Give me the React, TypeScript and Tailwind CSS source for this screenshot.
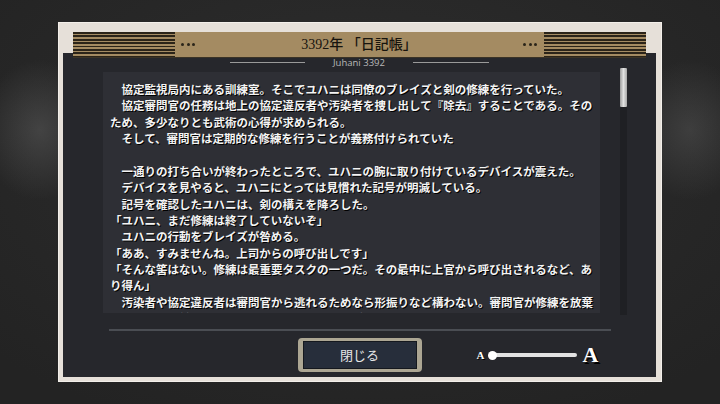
import React from "react";

const lines: string[] = [
  "　協定監視局内にある訓練室。そこでユハニは同僚のブレイズと剣の修練を行っていた。",
  "　協定審問官の任務は地上の協定違反者や汚染者を捜し出して『除去』することである。その",
  "ため、多少なりとも武術の心得が求められる。",
  "　そして、審問官は定期的な修練を行うことが義務付けられていた",
  "",
  "　一通りの打ち合いが終わったところで、ユハニの腕に取り付けているデバイスが震えた。",
  "　デバイスを見やると、ユハニにとっては見慣れた記号が明滅している。",
  "　記号を確認したユハニは、剣の構えを降ろした。",
  "「ユハニ、まだ修練は終了していないぞ」",
  "　ユハニの行動をブレイズが咎める。",
  "「ああ、すみませんね。上司からの呼び出しです」",
  "「そんな筈はない。修練は最重要タスクの一つだ。その最中に上官から呼び出されるなど、あ",
  "り得ん」",
  "　汚染者や協定違反者は審問官から逃れるためなら形振りなど構わない。審問官が修練を放棄",
  "することは、常に敵とその人を逃すことにつながる。",
];

function Dots() {
  return (
    <div className="flex gap-[2.5px]">
      <span className="w-[3px] h-[3px] rounded-full bg-[#2a2419]" />
      <span className="w-[3px] h-[3px] rounded-full bg-[#2a2419]" />
      <span className="w-[3px] h-[3px] rounded-full bg-[#2a2419]" />
    </div>
  );
}

function Stripes() {
  return (
    <div className="w-[102px] h-full bg-[repeating-linear-gradient(to_bottom,#2b2419_0px,#2b2419_1.7px,#a48b62_1.7px,#a48b62_3.4px)]" />
  );
}

export default function App() {
  return (
    <div
      className="w-[720px] h-[404px] overflow-hidden bg-[#262626] bg-[radial-gradient(ellipse_60px_70px_at_40px_130px,rgba(90,90,90,0.55),transparent),radial-gradient(ellipse_60px_70px_at_690px_130px,rgba(90,90,90,0.45),transparent),radial-gradient(ellipse_500px_300px_at_360px_150px,#2e2e2e,#232323)] pl-[58px] pt-[22px]"
      style={{ fontFamily: '"Noto Sans CJK JP", "Noto Sans", sans-serif' }}
    >
      {/* cream frame */}
      <div className="w-[604px] h-[360px] bg-[#e6e0d9] pt-[10px] pl-[5px] pr-[6px] pb-[5px] flex flex-col shadow-[inset_0_0_0_1px_#f3efea]">
        {/* header bar */}
        <div className="relative z-10 mx-[10px] h-[25px] bg-[#a48b62] flex items-stretch shadow-[0_1px_0_#3a3326]">
          <Stripes />
          <div className="ml-[6px] flex items-center">
            <Dots />
          </div>
          <div
            className="flex-1 flex items-center justify-center text-[14px] font-medium text-[#17140e]"
            style={{ fontFamily: '"Liberation Serif", "Noto Sans CJK JP", serif' }}
          >
            3392年 「日記帳」
          </div>
          <div className="mr-[7px] flex items-center">
            <Dots />
          </div>
          <Stripes />
        </div>
        {/* dark panel */}
        <div className="-mt-[4px] flex-1 bg-[#26272c] flex flex-col">
          {/* sub heading */}
          <div className="h-[15px] pt-[4px] flex items-center justify-center gap-[9px]">
            <div className="w-[75px] h-[1px] bg-[#9a9a9a]" />
            <span
              className="text-[9.5px] leading-[12px] text-[#b9b9b9] w-[90px] text-center"
              style={{ fontFamily: '"Open Sans", "Noto Sans", sans-serif' }}
            >
              Juhani 3392
            </span>
            <div className="w-[76px] h-[1px] bg-[#9a9a9a]" />
          </div>
          {/* main row */}
          <div className="flex items-start">
            <div className="ml-[40px] mt-[4px] w-[497px] h-[241px] bg-[#2e2f35] overflow-hidden pl-[7px] pt-[9px]">
              {lines.map((l, i) => (
                <div
                  key={i}
                  className="h-[16.36px] leading-[16.36px] text-[11.5px] font-bold text-[#f4f4f4] whitespace-pre [text-shadow:1px_1px_0_#000]"
                >
                  {l || "\u00a0"}
                </div>
              ))}
            </div>
            <div className="ml-[20px] w-[7px] h-[247px] bg-[#1f2024] flex flex-col">
              <div className="h-[39px] w-full rounded-[1px] bg-[linear-gradient(to_right,#9c9c9c,#e2e2e2_50%,#a8a8a8)]" />
            </div>
          </div>
          {/* separator */}
          <div className="ml-[46px] mt-[14px] w-[502px] h-[2px] bg-[#4a4d53]" />
          {/* bottom row */}
          <div className="mt-[7px] grid grid-cols-[1fr_auto_1fr] items-center">
            <div />
            <button className="w-[124px] h-[34px] rounded-[4px] border-x-[5px] border-y-[3px] border-[#aca693] bg-[#272e3b] shadow-[inset_0_0_0_1px_#15181e] flex items-center justify-center text-[13px] text-[#e8e8e8]">
              閉じる
            </button>
            <div className="pl-[55px] flex items-center">
              <span
                className="text-[11px] font-bold text-white leading-none [text-shadow:1px_1px_0_#000]"
                style={{ fontFamily: '"Liberation Serif", serif' }}
              >
                A
              </span>
              <div className="relative ml-[4px] w-[89px] h-[10px]">
                <div className="absolute left-[5px] right-0 top-[3px] h-[4px] rounded-full bg-[#e2e2e2]" />
                <div className="absolute left-0 top-[0.5px] w-[9px] h-[9px] rounded-full bg-white" />
              </div>
              <span
                className="ml-[5px] text-[22px] font-bold text-white leading-none [text-shadow:2px_2px_0_#000]"
                style={{ fontFamily: '"Liberation Serif", serif' }}
              >
                A
              </span>
            </div>
          </div>
        </div>
      </div>
    </div>
  );
}
